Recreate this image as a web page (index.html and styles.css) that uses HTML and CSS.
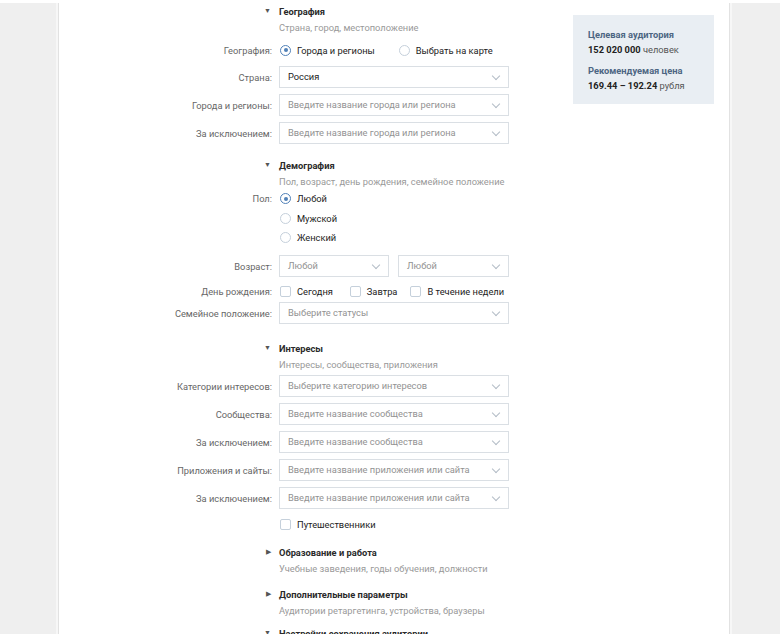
FILE: index.html
```html
<!DOCTYPE html>
<html lang="ru">
  <head>
    <meta charset="UTF-8" />
    <title>Целевая аудитория</title>
    <link rel="stylesheet" href="styles.css">
  </head>
  <body>
    <div class="frame">
      <div class="panel">
        <div class="form">
          <!-- География -->
          <div class="row section-head">
            <span class="caret">&#9660;</span>
            <span class="head-title">География</span>
          </div>
          <div class="row sub-row">
            <span></span>
            <span class="sub">Страна, город, местоположение</span>
          </div>
          <div class="row choice-row geo-choice">
            <span class="label">География:</span>
            <div class="inline-opts">
              <label class="opt wide"><span class="radio checked"></span>Города и регионы</label>
              <label class="opt"><span class="radio"></span>Выбрать на карте</label>
            </div>
          </div>
          <div class="row field-row first-field">
            <span class="label">Страна:</span>
            <div class="select value">Россия<span class="chev"></span></div>
          </div>
          <div class="row field-row">
            <span class="label">Города и регионы:</span>
            <div class="select">Введите название города или региона<span class="chev"></span></div>
          </div>
          <div class="row field-row">
            <span class="label">За исключением:</span>
            <div class="select">Введите название города или региона<span class="chev"></span></div>
          </div>

          <!-- Демография -->
          <div class="row section-head gap-13">
            <span class="caret">&#9660;</span>
            <span class="head-title">Демография</span>
          </div>
          <div class="row sub-row">
            <span></span>
            <span class="sub">Пол, возраст, день рождения, семейное положение</span>
          </div>
          <div class="row stack-row">
            <span class="label">Пол:</span>
            <label class="opt"><span class="radio checked"></span>Любой</label>
          </div>
          <div class="row stack-row">
            <span></span>
            <label class="opt"><span class="radio"></span>Мужской</label>
          </div>
          <div class="row stack-row">
            <span></span>
            <label class="opt"><span class="radio"></span>Женский</label>
          </div>
          <div class="row field-row age-row">
            <span class="label">Возраст:</span>
            <div class="pair">
              <div class="select">Любой<span class="chev"></span></div>
              <div class="select">Любой<span class="chev"></span></div>
            </div>
          </div>
          <div class="row check-row">
            <span class="label">День рождения:</span>
            <div class="inline-opts">
              <label class="opt box-opt"><span class="box"></span>Сегодня</label>
              <label class="opt box-opt short"><span class="box"></span>Завтра</label>
              <label class="opt"><span class="box"></span>В течение недели</label>
            </div>
          </div>
          <div class="row field-row tight">
            <span class="label">Семейное положение:</span>
            <div class="select">Выберите статусы<span class="chev"></span></div>
          </div>

          <!-- Интересы -->
          <div class="row section-head gap-16">
            <span class="caret">&#9660;</span>
            <span class="head-title">Интересы</span>
          </div>
          <div class="row sub-row">
            <span></span>
            <span class="sub">Интересы, сообщества, приложения</span>
          </div>
          <div class="row field-row first-interest">
            <span class="label">Категории интересов:</span>
            <div class="select">Выберите категорию интересов<span class="chev"></span></div>
          </div>
          <div class="row field-row">
            <span class="label">Сообщества:</span>
            <div class="select">Введите название сообщества<span class="chev"></span></div>
          </div>
          <div class="row field-row">
            <span class="label">За исключением:</span>
            <div class="select">Введите название сообщества<span class="chev"></span></div>
          </div>
          <div class="row field-row">
            <span class="label">Приложения и сайты:</span>
            <div class="select">Введите название приложения или сайта<span class="chev"></span></div>
          </div>
          <div class="row field-row">
            <span class="label">За исключением:</span>
            <div class="select">Введите название приложения или сайта<span class="chev"></span></div>
          </div>
          <div class="row check-row travel">
            <span></span>
            <label class="opt"><span class="box"></span>Путешественники</label>
          </div>

          <!-- Свернутые разделы -->
          <div class="row section-head gap-10">
            <span class="caret side">&#9654;</span>
            <span class="head-title">Образование и работа</span>
          </div>
          <div class="row sub-row">
            <span></span>
            <span class="sub">Учебные заведения, годы обучения, должности</span>
          </div>
          <div class="row section-head gap-10">
            <span class="caret side">&#9654;</span>
            <span class="head-title">Дополнительные параметры</span>
          </div>
          <div class="row sub-row">
            <span></span>
            <span class="sub">Аудитории ретаргетинга, устройства, браузеры</span>
          </div>
          <div class="row section-head gap-7">
            <span class="caret">&#9660;</span>
            <span class="head-title">Настройки сохранения аудитории</span>
          </div>
        </div>

        <div class="aside">
          <div class="stat-title">Целевая аудитория</div>
          <div class="stat-value"><b>152 020 000</b> человек</div>
          <div class="stat-title second">Рекомендуемая цена</div>
          <div class="stat-value"><b>169.44 – 192.24</b> рубля</div>
        </div>
      </div>
    </div>
  </body>
</html>
```

FILE: styles.css
```css
html {
  overflow: hidden;
}

body {
  margin: 0;
  padding: 0;
  background: #fff;
  font-family: Roboto, "Open Sans", sans-serif;
  font-size: 9.3px;
  color: #222;
}

.frame {
  margin: 3px 4px 0 0;
  height: 631px;
  background: #efefef;
  padding-left: 58px;
  padding-right: 50px;
}

.panel {
  height: 100%;
  background: #fff;
  border-left: 1px solid #e2e2e2;
  border-right: 1px solid #e2e2e2;
  box-shadow: -2px 0 0 #f7f7f7, 2px 0 0 #f7f7f7;
  display: flex;
  align-items: flex-start;
}

.form {
  width: 450px;
}

.row {
  display: grid;
  grid-template-columns: 213px 230px;
  column-gap: 7px;
  align-items: center;
}

.label {
  text-align: right;
  color: #666;
  white-space: nowrap;
}

/* section headers */
.section-head {
  height: 16px;
}

.gap-7 { margin-top: 7px; }
.gap-10 { margin-top: 10px; }
.gap-13 { margin-top: 13px; }
.gap-16 { margin-top: 16px; }

.caret {
  text-align: right;
  font-size: 7px;
  color: #555;
  padding-right: 1px;
}

.head-title {
  font-weight: 700;
  color: #2a2a2a;
  white-space: nowrap;
}

.sub-row {
  height: 16px;
}

.sub {
  color: #999;
  white-space: nowrap;
}

/* radios and checkboxes */
.choice-row {
  height: 22px;
  margin-top: 4px;
}

.stack-row {
  height: 19.5px;
}

.check-row {
  height: 20px;
  margin-top: 4px;
}

.travel {
  margin-top: 5px;
}

.inline-opts {
  display: flex;
  align-items: center;
  white-space: nowrap;
}

.opt {
  display: flex;
  align-items: center;
  gap: 6px;
  color: #222;
  white-space: nowrap;
}

.opt.wide {
  margin-right: 23px;
}

.box-opt {
  margin-right: 16px;
}

.box-opt.short {
  margin-right: 12px;
}

.radio {
  width: 11px;
  height: 11px;
  margin-left: 1px;
  border: 1px solid #c5d0db;
  border-radius: 50%;
  box-sizing: border-box;
  display: inline-flex;
  align-items: center;
  justify-content: center;
  background: #fff;
}

.radio.checked {
  border-color: #5181b8;
}

.radio.checked::before {
  content: "";
  width: 4px;
  height: 4px;
  border-radius: 50%;
  background: #5181b8;
}

.box {
  width: 11px;
  height: 11px;
  border: 1px solid #c5d0db;
  border-radius: 2px;
  box-sizing: border-box;
  background: #fff;
  margin-left: 1px;
}

/* selects */
.field-row {
  margin-top: 6px;
}

.first-field {
  margin-top: 5px;
}

.age-row {
  margin-top: 7.5px;
}

.tight {
  margin-top: 1px;
}

.first-interest {
  margin-top: 3px;
}

.select {
  position: relative;
  height: 22px;
  box-sizing: border-box;
  border: 1px solid #dadfe4;
  background: #fff;
  padding: 0 22px 0 8px;
  line-height: 20px;
  color: #929292;
  white-space: nowrap;
  overflow: hidden;
}

.select.value {
  color: #222;
}

.chev {
  position: absolute;
  right: 9px;
  top: 6px;
  width: 5px;
  height: 5px;
  border-right: 1px solid #b3bcc6;
  border-bottom: 1px solid #b3bcc6;
  transform: rotate(45deg);
}

.pair {
  display: grid;
  grid-template-columns: 110px 111px;
  column-gap: 9px;
}

/* right card */
.aside {
  margin-left: 64px;
  margin-top: 12px;
  width: 141px;
  height: 89px;
  box-sizing: border-box;
  background: #e9eef3;
  padding: 12px 15px 0;
  white-space: nowrap;
}

.stat-title {
  font-weight: 700;
  color: #4d6683;
  line-height: 15px;
}

.stat-title.second {
  margin-top: 6px;
}

.stat-value {
  color: #555;
  line-height: 15px;
}

.stat-value b {
  color: #222;
}
```
